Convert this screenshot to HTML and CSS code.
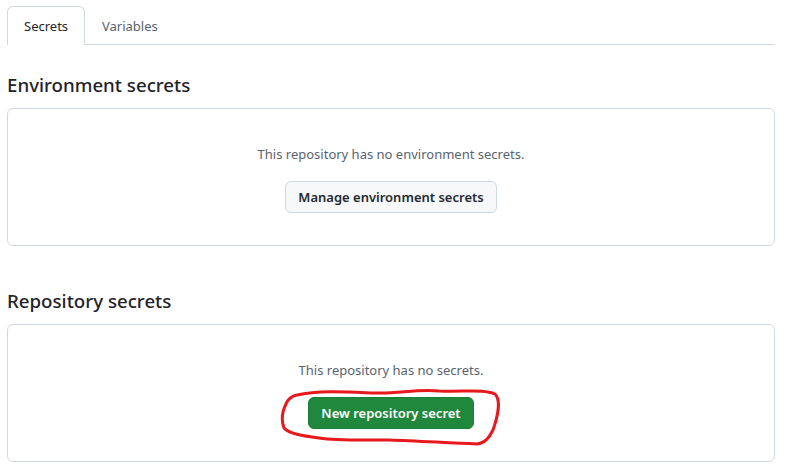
FILE: index.html
```html
<!DOCTYPE html>
<html lang="en">
<head>
<meta charset="utf-8">
<title>Secrets</title>
<link rel="stylesheet" href="styles.css">
</head>
<body>
<div class="page">
  <nav class="tabs">
    <a class="tab tab-active">Secrets</a>
    <a class="tab">Variables</a>
  </nav>

  <h2 class="section-title section-first">Environment secrets</h2>
  <div class="blankslate">
    <p class="blank-text">This repository has no environment secrets.</p>
    <button class="btn">Manage environment secrets</button>
  </div>

  <h2 class="section-title">Repository secrets</h2>
  <div class="blankslate">
    <p class="blank-text">This repository has no secrets.</p>
    <div class="btn-wrap">
      <button class="btn btn-primary">New repository secret</button>
      <svg class="scribble" width="230" height="70" viewBox="0 0 230 70" fill="none">
        <path d="M18 9 C40 4 70 6 95 7 C120 8 135 3 160 5 C185 6 205 3 216 8 C222 14 219 30 214 44 C210 52 206 57 198 58 C170 57 140 55 110 54 C85 54 60 55 40 52 C25 50 10 48 5 42 C2 34 3 26 7 18 C9 13 13 10 18 9" stroke="#e8191c" stroke-width="3" stroke-linecap="round" stroke-linejoin="round"/>
      </svg>
    </div>
  </div>
</div>
</body>
</html>
```

FILE: styles.css
```css
* { box-sizing: border-box; }
html, body { margin: 0; padding: 0; background: #ffffff; }
body {
  font-family: "Noto Sans", "Open Sans", "Liberation Sans", sans-serif;
  color: #1f2328;
  font-size: 13px;
  line-height: 21px;
}
.page {
  width: 768px;
  margin-left: 7px;
  padding-top: 6px;
}
.tabs {
  display: flex;
  border-bottom: 1px solid #d1d9e0;
  height: 39px;
}
.tab {
  display: block;
  padding: 9px 16px 8px;
  font-size: 13px;
  line-height: 21px;
  color: #59636e;
  border: 1px solid transparent;
  border-bottom: none;
  border-radius: 6px 6px 0 0;
}
.tab-active {
  color: #1f2328;
  border-color: #d1d9e0;
  background: #ffffff;
  margin-bottom: -1px;
  width: 78px;
}
.section-title {
  margin: 40px 0 8px;
  font-size: 18.7px;
  font-weight: 500;
  line-height: 30px;
  color: #1f2328;
}
.section-first { margin-top: 25px; margin-bottom: 8px; }
.blankslate {
  border: 1px solid #d1d9e0;
  border-radius: 6px;
  padding: 35px 16px 32px;
  display: flex;
  flex-direction: column;
  align-items: center;
}
.blank-text {
  margin: 0 0 16px;
  color: #59636e;
  font-size: 13px;
  line-height: 21px;
}
.btn {
  height: 32px;
  padding: 0 12px;
  font-family: inherit;
  font-size: 13px;
  font-weight: 600;
  white-space: nowrap;
  color: #25292e;
  background: #f6f8fa;
  border: 1px solid #d1d9e0;
  border-radius: 6px;
}
.btn-wrap { position: relative; }
.btn-primary {
  color: #ffffff;
  background: #1f883d;
  border-color: #1a7f37;
}
.scribble {
  position: absolute;
  left: -29px;
  top: -11px;
  pointer-events: none;
}
```
